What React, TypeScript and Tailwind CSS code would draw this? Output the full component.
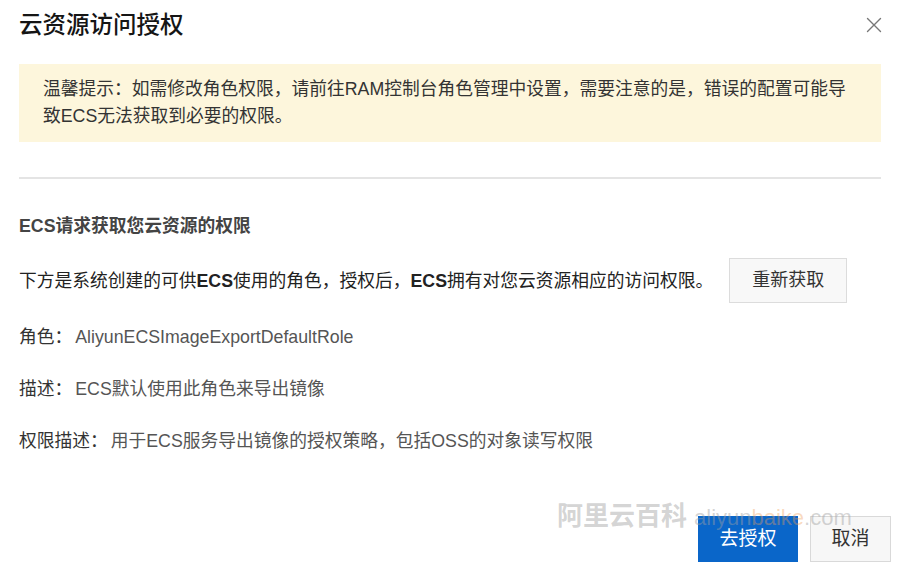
import React from "react";

const font = {
  fontFamily: '"Liberation Sans", "Noto Sans CJK SC", sans-serif',
};

const details = [
  { label: "角色：", value: "AliyunECSImageExportDefaultRole", mt: "mt-[22px]" },
  { label: "描述：", value: "ECS默认使用此角色来导出镜像", mt: "mt-[28px]" },
  {
    label: "权限描述：",
    value: "用于ECS服务导出镜像的授权策略，包括OSS的对象读写权限",
    mt: "mt-[28px]",
  },
];

const App = () => {
  return (
    <div
      className="relative w-[900px] h-[570px] bg-white px-[19px] text-[#333] overflow-hidden"
      style={font}
    >
      {/* header */}
      <div className="flex h-[50px] items-center justify-between">
        <h1 className="text-[23.5px] font-medium leading-[30px] text-[#151515]">
          云资源访问授权
        </h1>
        <button className="mr-[-1px] flex h-[16px] w-[16px] items-center justify-center">
          <svg width="16" height="16" viewBox="0 0 16 16" fill="none">
            <path
              d="M1.5 1.5L14.5 14.5M14.5 1.5L1.5 14.5"
              stroke="#777"
              strokeWidth="1.4"
              strokeLinecap="round"
            />
          </svg>
        </button>
      </div>

      {/* notice */}
      <div className="mt-[14px] bg-[#fdf6dc] pl-[24px] pr-[28px] py-[12px] text-[17.75px] leading-[27px] text-[#333]">
        温馨提示：如需修改角色权限，请前往RAM控制台角色管理中设置，需要注意的是，错误的配置可能导致ECS无法获取到必要的权限。
      </div>

      <div className="mt-[35px] h-[2px] bg-[#e4e4e4]" />

      <div className="mt-[35px] text-[17.75px] font-bold leading-[24px] text-[#444]">
        ECS请求获取您云资源的权限
      </div>

      <div className="mt-[20px] flex items-center">
        <p className="text-[17.75px] leading-[24px] text-[#222]">
          下方是系统创建的可供<span className="font-bold">ECS</span>
          使用的角色，授权后，<span className="font-bold">ECS</span>
          拥有对您云资源相应的访问权限。
        </p>
        <button className="ml-[16px] h-[45px] w-[118px] border border-[#dcdcdc] bg-[#f8f8f8] text-[18px] text-[#333]">
          重新获取
        </button>
      </div>

      {details.map((item) => (
        <div key={item.label} className={`${item.mt} text-[17.75px] leading-[24px]`}>
          <span className="text-[#333]">{item.label}</span>
          <span className="ml-[3px] text-[#555]">{item.value}</span>
        </div>
      ))}

      {/* footer */}
      <div className="mr-[-10px] mt-[63px] flex justify-end gap-[12px]">
        <button className="h-[46px] w-[100px] bg-[#0a66c9] text-[19px] text-white">
          去授权
        </button>
        <button className="h-[46px] w-[81px] border border-[#d9d9d9] bg-[#f7f7f7] text-[19px] text-[#333]">
          取消
        </button>
      </div>

      {/* watermark */}
      <div className="pointer-events-none absolute left-[557px] top-[497px] flex items-baseline whitespace-nowrap">
        <span className="text-[26px] font-bold text-[rgba(160,160,160,0.45)]">阿里云百科</span>
        <span className="ml-[7px] text-[22px] text-[rgba(160,160,160,0.45)]">
          aliyun<span className="text-[rgba(240,160,90,0.4)]">baike</span>.com
        </span>
      </div>
    </div>
  );
};

export default App;
